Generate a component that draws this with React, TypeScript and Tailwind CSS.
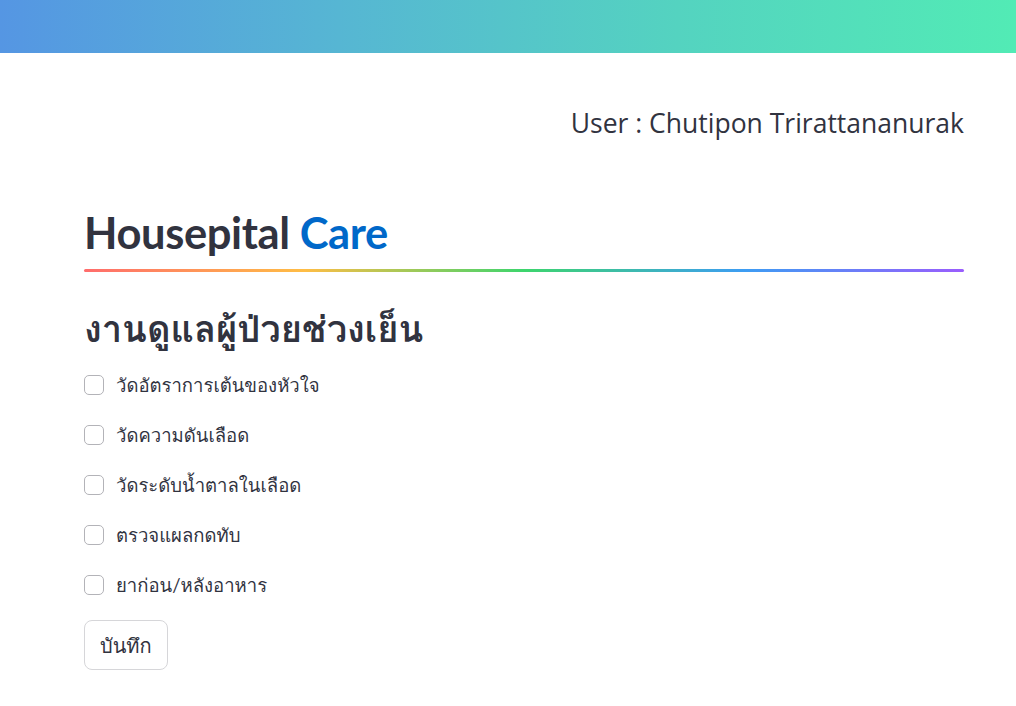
import React from "react";

const items = [
  "วัดอัตราการเต้นของหัวใจ",
  "วัดความดันเลือด",
  "วัดระดับน้ำตาลในเลือด",
  "ตรวจแผลกดทับ",
  "ยาก่อน/หลังอาหาร",
];

const thaiStack =
  'Lato, Loma, Garuda, "Noto Sans Thai Looped", Sarabun, Tahoma, Waree, Umpush, "Noto Sans Thai", "Noto Sans", sans-serif';

export default function App() {
  return (
    <div className="min-h-[706px] w-full bg-white text-[#31333f]" style={{ fontFamily: thaiStack }}>
      <div className="h-[53px] w-full bg-[linear-gradient(to_right,#5596e3,#56b6d3,#54d3c0,#52ebb5)]" />
      <div className="w-[880px] ml-[84px]">
        <div className="flex justify-end pt-[50px]">
          <p className="text-[26.5px] leading-[40px] font-['Open_Sans',sans-serif]">
            User : Chutipon Trirattananurak
          </p>
        </div>
        <h1 className="mt-[59px] text-[43.5px] leading-[60px] font-bold tracking-[-0.4px]">
          Housepital <span className="text-[#0068c9]">Care</span>
        </h1>
        <div className="mt-[7px] h-[3px] rounded-full bg-[linear-gradient(to_right,#ff6c6c,#ffbd45,#3dd56d,#3d9df3,#9a5dfd)]" />
        <h2 className="mt-[34px] text-[36.3px] leading-[44px] font-bold">งานดูแลผู้ป่วยช่วงเย็น</h2>
        <div className="mt-[10px] flex flex-col">
          {items.map((t) => (
            <label key={t} className="flex items-center h-[50px] gap-[12px]">
              <span className="w-[20px] h-[20px] rounded-[5px] border border-[#b3b3b8] bg-white shrink-0" />
              <span className="text-[18.5px] leading-[26px]">{t}</span>
            </label>
          ))}
        </div>
        <button className="mt-[10px] h-[50px] px-[15px] rounded-[8px] border border-[#d6d6d9] bg-white text-[20px]">
          บันทึก
        </button>
      </div>
    </div>
  );
}
